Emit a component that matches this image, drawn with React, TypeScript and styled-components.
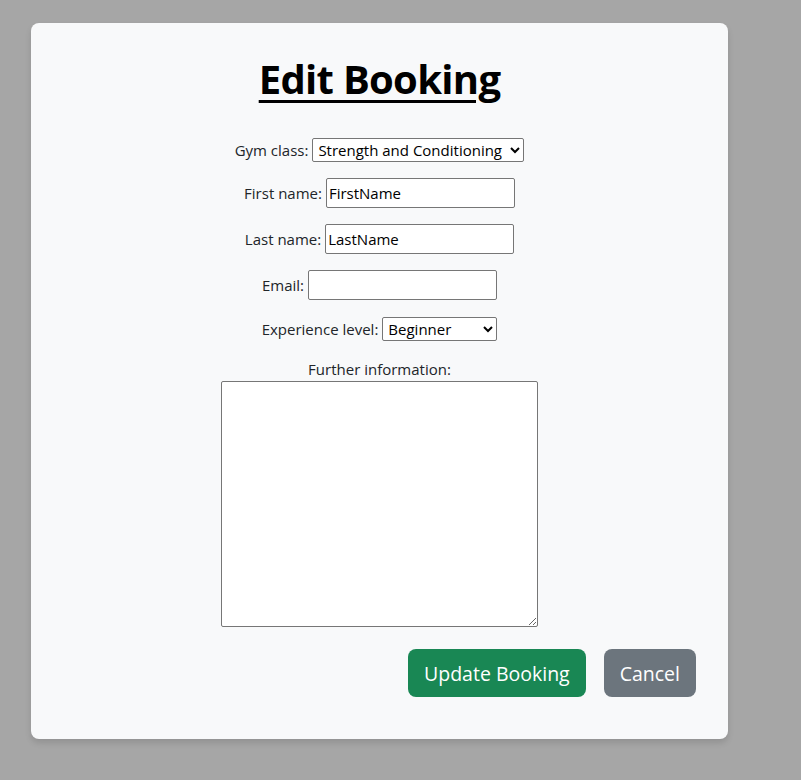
import React from "react";
import styled, { createGlobalStyle } from "styled-components";

const Global = createGlobalStyle`
  html, body { margin: 0; padding: 0; background: #a6a6a6; }
  body { font-family: "Open Sans", "Noto Sans", sans-serif; color: #212529; }
  * { box-sizing: border-box; }
`;

const Page = styled.div`
  min-height: 780px;
  padding: 23px 0 0 31px;
`;

const Card = styled.div`
  width: 697px;
  background: #f8f9fa;
  border-radius: 8px;
  box-shadow: 0 4px 6px rgba(0, 0, 0, 0.12);
  padding: 32px 32px 42px;
  display: flex;
  flex-direction: column;
  align-items: center;
`;

const Title = styled.h1`
  margin: 0 0 35px;
  font-size: 40px;
  line-height: 48px;
  font-weight: 700;
  text-decoration: underline;
  text-decoration-thickness: 3px;
  text-underline-offset: 6px;
  color: #000;
  letter-spacing: -0.7px;
`;

const Row = styled.div<{ $h?: number }>`
  display: flex;
  align-items: flex-end;
  justify-content: center;
  gap: 4px;
  height: ${(p) => p.$h ?? 30}px;
  margin-bottom: 16px;
  font-size: 15px;
`;

const Label = styled.label`
  font-size: 15px;
  line-height: 24px;
  color: #212529;
  align-self: center;
`;

const Input = styled.input`
  width: 189px;
  height: 30px;
  border: 1px solid #767676;
  border-radius: 2px;
  background: #fff;
  font: inherit;
  font-size: 15px;
  padding: 1px 2px;
  color: #000;
`;

const Select = styled.select<{ $w: number }>`
  width: ${(p) => p.$w}px;
  height: 24px;
  border: 1px solid #767676;
  border-radius: 2px;
  background: #fff;
  font: inherit;
  font-size: 15px;
  color: #000;
  padding: 0 1px;
`;

const Block = styled.div`
  display: flex;
  flex-direction: column;
  align-items: center;
`;

const TextArea = styled.textarea`
  width: 317px;
  height: 246px;
  border: 1px solid #767676;
  border-radius: 2px;
  background: #fff;
  font: inherit;
  resize: both;
  display: block;
`;

const Actions = styled.div`
  align-self: stretch;
  display: flex;
  justify-content: flex-end;
  gap: 18px;
  margin-top: 22px;
`;

const Button = styled.button<{ $variant: "success" | "secondary" }>`
  height: 48px;
  padding: 0 16px;
  border: none;
  border-radius: 8px;
  font-family: inherit;
  font-size: 19.5px;
  color: #fff;
  background: ${(p) => (p.$variant === "success" ? "#198754" : "#6c757d")};
  cursor: pointer;
`;

export default function App() {
  return (
    <>
      <Global />
      <Page>
        <Card>
          <Title>Edit Booking</Title>
          <Row $h={24}>
            <Label>Gym class:</Label>
            <Select $w={212} defaultValue="sc">
              <option value="sc">Strength and Conditioning</option>
              <option value="yoga">Yoga</option>
            </Select>
          </Row>
          <Row>
            <Label>First name:</Label>
            <Input defaultValue="FirstName" />
          </Row>
          <Row>
            <Label>Last name:</Label>
            <Input defaultValue="LastName" />
          </Row>
          <Row>
            <Label>Email:</Label>
            <Input defaultValue="" />
          </Row>
          <Row $h={25}>
            <Label>Experience level:</Label>
            <Select $w={115} defaultValue="b">
              <option value="b">Beginner</option>
              <option value="i">Intermediate</option>
            </Select>
          </Row>
          <Block>
            <Label>Further information:</Label>
            <TextArea />
          </Block>
          <Actions>
            <Button $variant="success">Update Booking</Button>
            <Button $variant="secondary">Cancel</Button>
          </Actions>
        </Card>
      </Page>
    </>
  );
}
